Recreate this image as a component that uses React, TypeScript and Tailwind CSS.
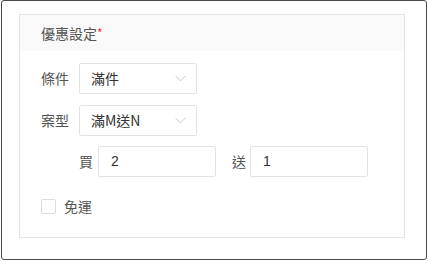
export default function App() {
  return (
    <div
      className="w-[428px] h-[261px] bg-white"
      style={{ fontFamily: '"Noto Sans CJK TC", "Liberation Sans", sans-serif' }}
    >
      <div className="ml-[1px] w-[426px] h-[260px] border border-[#4a4a4a] rounded-[3px] pl-[17px] pt-[13px]">
        <div className="w-[386px] h-[224px] border border-[#e3e3e3] bg-white">
          {/* Header */}
          <div className="h-[36px] bg-[#f9f9f9] pl-[21px] flex items-center text-[14px] text-[#555]">
            優惠設定<span className="text-[#e4393c] text-[12px] self-start mt-[9px]">*</span>
          </div>

          {/* Body */}
          <div className="pl-[21px] pt-[12px] flex flex-col text-[14px]">
            <div className="flex items-center">
              <span className="w-[38px] text-[#555]">條件</span>
              <Select value="滿件" />
            </div>
            <div className="flex items-center mt-[11px]">
              <span className="w-[38px] text-[#555]">案型</span>
              <Select value="滿M送N" />
            </div>
            <div className="flex items-center mt-[10px] ml-[38px]">
              <span className="text-[#555]">買</span>
              <Input value="2" className="ml-[5px]" />
              <span className="ml-[16px] text-[#555]">送</span>
              <Input value="1" className="ml-[4px]" />
            </div>
            <label className="flex items-center mt-[19px]">
              <span className="w-[15px] h-[15px] border border-[#dcdcdc] rounded-[2px] bg-white" />
              <span className="ml-[8px] text-[#555]">免運</span>
            </label>
          </div>
        </div>
      </div>
    </div>
  );
}

function Select({ value }: { value: string }) {
  return (
    <div className="w-[118px] h-[31px] border border-[#e3e3e3] rounded-[2px] flex items-center justify-between pl-[11px] pr-[10px] text-[#333]">
      <span>{value}</span>
      <svg width="11" height="7" viewBox="0 0 11 7" fill="none">
        <path d="M0.5 0.8 L5.5 5.8 L10.5 0.8" stroke="#c8c8c8" strokeWidth="1" />
      </svg>
    </div>
  );
}

function Input({ value, className = '' }: { value: string; className?: string }) {
  return (
    <div
      className={`w-[118px] h-[31px] border border-[#e3e3e3] rounded-[2px] flex items-center pl-[12px] text-[#333] ${className}`}
      style={{ fontFamily: '"Liberation Sans", sans-serif' }}
    >
      {value}
    </div>
  );
}
